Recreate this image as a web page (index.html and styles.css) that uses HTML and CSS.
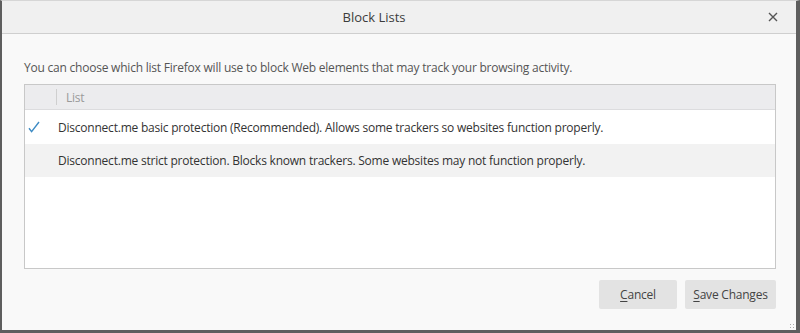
FILE: index.html
```html
<!DOCTYPE html>
<html>
<head>
<meta charset="utf-8" />
<title>Block Lists</title>
<link rel="stylesheet" href="styles.css">
</head>
<body>
	<div class="win">
		<div class="title_bar">
			<span class="title">Block Lists</span>
			<a href="javascript:;" class="close">
				<svg width="10" height="10" viewBox="0 0 10 10"><path d="M1 1L9 9M9 1L1 9" stroke="#555" stroke-width="1.4" fill="none"/></svg>
			</a>
		</div>
		<div class="content">
			<p class="desc">You can choose which list Firefox will use to block Web elements that may track your browsing activity.</p>
			<div class="list_box">
				<div class="list_head">
					<span class="col_check"></span>
					<span class="col_name">List</span>
				</div>
				<div class="row">
					<span class="col_check">
						<svg width="12" height="12" viewBox="0 0 12 12"><path d="M1 7.2L3.6 10.6L11 1" stroke="#3d8bc4" stroke-width="1.4" fill="none"/></svg>
					</span>
					<span class="row_text">Disconnect.me basic protection (Recommended). Allows some trackers so websites function properly.</span>
				</div>
				<div class="row alt">
					<span class="col_check"></span>
					<span class="row_text">Disconnect.me strict protection. Blocks known trackers. Some websites may not function properly.</span>
				</div>
			</div>
			<div class="btns">
				<a href="javascript:;" class="btn"><u>C</u>ancel</a>
				<a href="javascript:;" class="btn save"><u>S</u>ave Changes</a>
			</div>
		</div>
		<span class="grip"></span>
	</div>
</body>
</html>
```
FILE: styles.css
```css
*{ padding:0; margin:0; box-sizing:border-box;}
body{ width:800px; height:333px; overflow:hidden; background:#fff; font-family:'Open Sans','Noto Sans',sans-serif; font-size:12px; letter-spacing:-0.22px; color:#4a4a4a;}
a{ color:inherit; text-decoration:none;}

.win{ position:relative; height:333px; background:#f9f9f9; border-left:2px solid #5e5e5e; border-right:4px solid #5e5e5e; border-bottom:3px solid #5e5e5e; border-top:1px solid #d6d6d6;}

.title_bar{ height:33px; display:flex; align-items:center; background:#f0f0f0; border-bottom:1px solid #cfcfcf; padding-right:18px;}
.title{ flex:1; text-align:center; font-size:13px; letter-spacing:0; color:#3c3c3c; padding-right:22px;}
.close{ display:flex; width:10px; height:10px;}

.content{ padding:26px 20px 0 22px;}
.desc{ line-height:16px; height:16px; color:#555;}

.list_box{ margin-top:8px; height:185px; background:#fff; border:1px solid #c8c8c8;}
.list_head{ height:25px; display:flex; align-items:center; background:#ececee; border-bottom:1px solid #dcdcde; color:#9a9a9a;}
.list_head .col_check{ height:16px; border-right:1px solid #cfcfcf;}
.col_name{ padding-left:9px;}
.col_check{ width:32px; flex:none; display:flex; justify-content:flex-start; padding-left:3px;}

.row{ height:34px; display:flex; align-items:center; color:#333;}
.row.alt{ height:33px; background:#f2f2f2;}
.row_text{ padding-left:1px;}

.btns{ display:flex; justify-content:flex-end; gap:8px; margin-top:11px;}
.btn{ height:29px; line-height:29px; width:78px; text-align:center; background:#e3e3e3; border-radius:2px; color:#444;}
.btn.save{ width:91px;}
.btn u{ text-decoration:underline; text-underline-offset:2px;}

.grip{ position:absolute; right:1px; bottom:1px; width:6px; height:6px; background:radial-gradient(circle, #aaa 0.6px, transparent 1px) 0 0/3px 3px;}
```
